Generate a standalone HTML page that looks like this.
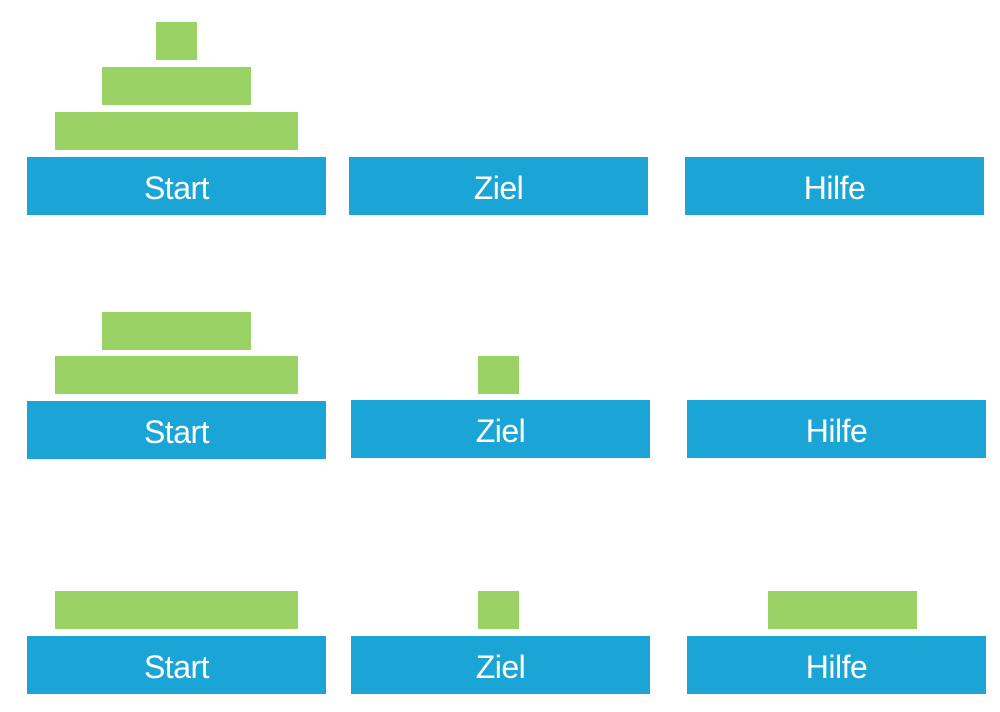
<!DOCTYPE html>
<html><head><style>
body{margin:0;width:1000px;height:712px;background:#fff;position:relative;overflow:hidden}
.g{position:absolute;background:#9AD266;height:38px}
.b{position:absolute;background:#1BA5D6;width:299px;height:58px;color:#fff;font-family:"Liberation Sans",sans-serif;font-size:32px;text-align:center;line-height:63px;letter-spacing:-0.5px}
</style></head><body>
<div class="g" style="left:156px;top:22px;width:41px"></div>
<div class="g" style="left:102px;top:67px;width:149px"></div>
<div class="g" style="left:55px;top:112px;width:243px"></div>
<div class="b" style="left:27px;top:157px">Start</div>
<div class="b" style="left:349px;top:157px">Ziel</div>
<div class="b" style="left:685px;top:157px">Hilfe</div>

<div class="g" style="left:102px;top:312px;width:149px"></div>
<div class="g" style="left:55px;top:356px;width:243px"></div>
<div class="g" style="left:478px;top:356px;width:41px"></div>
<div class="b" style="left:27px;top:401px">Start</div>
<div class="b" style="left:351px;top:400px">Ziel</div>
<div class="b" style="left:687px;top:400px">Hilfe</div>

<div class="g" style="left:55px;top:591px;width:243px"></div>
<div class="g" style="left:478px;top:591px;width:41px"></div>
<div class="g" style="left:768px;top:591px;width:149px"></div>
<div class="b" style="left:27px;top:636px">Start</div>
<div class="b" style="left:351px;top:636px">Ziel</div>
<div class="b" style="left:687px;top:636px">Hilfe</div>
</body></html>
